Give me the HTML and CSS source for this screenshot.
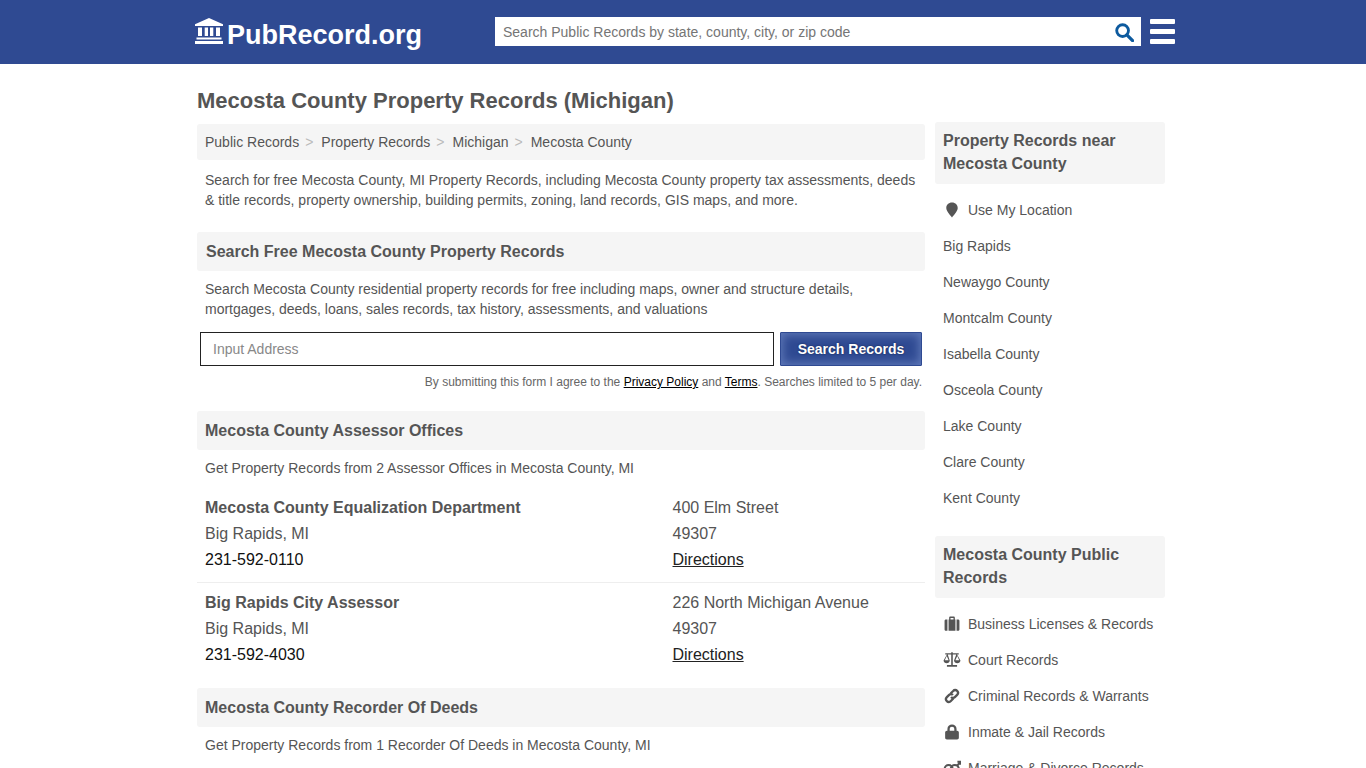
FILE: index.html
```html
<!DOCTYPE html>
<html lang="en">
<head>
<meta charset="utf-8">
<title>Mecosta County Property Records (Michigan)</title>
<link rel="stylesheet" href="styles.css">
</head>
<body>
<header class="topbar">
  <div class="topbar-inner">
    <a class="logo" href="#">
      <svg class="logo-icon" viewBox="0 0 28 26" aria-hidden="true"><path fill="#fff" d="M14 0 28 6.2V8H0V6.200ZM3 9.500H7V18H3ZM9.700 9.500H13V18H9.700ZM15 9.500H18.300V18H15ZM21 9.500H25V18H21ZM1.500 19.500H26.500V21.500H1.500ZM0 23H28V26H0Z"/></svg>
      <span class="logo-text">PubRecord.org</span>
    </a>
    <form class="topsearch">
      <input class="topsearch-input" type="text" placeholder="Search Public Records by state, county, city, or zip code">
      <svg class="topsearch-icon" viewBox="0 0 20 20" aria-hidden="true"><circle cx="8" cy="8" r="6.200" fill="none" stroke="#0d5a9e" stroke-width="3"/><path d="M12.500 12.500 18.500 18.500" stroke="#0d5a9e" stroke-width="3.400" stroke-linecap="round"/></svg>
    </form>
    <div class="burger"><span></span><span></span><span></span></div>
  </div>
</header>

<div class="page">
  <main class="main">
    <h1 class="title">Mecosta County Property Records (Michigan)</h1>
    <nav class="crumbs">
      <a>Public Records</a><i>&gt;</i><a>Property Records</a><i>&gt;</i><a>Michigan</a><i>&gt;</i><a>Mecosta County</a>
    </nav>
    <p class="intro">Search for free Mecosta County, MI Property Records, including Mecosta County property tax assessments, deeds &amp; title records, property ownership, building permits, zoning, land records, GIS maps, and more.</p>

    <h2 class="section section-search">Search Free Mecosta County Property Records</h2>
    <p class="intro intro-search">Search Mecosta County residential property records for free including maps, owner and structure details, mortgages, deeds, loans, sales records, tax history, assessments, and valuations</p>
    <form class="address">
      <input class="address-input" type="text" placeholder="Input Address">
      <button class="address-btn" type="button">Search Records</button>
    </form>
    <p class="legal">By submitting this form I agree to the <a href="#">Privacy Policy</a> and <a href="#">Terms</a>. Searches limited to 5 per day.</p>

    <h2 class="section">Mecosta County Assessor Offices</h2>
    <p class="lead">Get Property Records from 2 Assessor Offices in Mecosta County, MI</p>
    <div class="office">
      <div class="office-col">
        <strong>Mecosta County Equalization Department</strong>
        <span>Big Rapids, MI</span>
        <span class="phone">231-592-0110</span>
      </div>
      <div class="office-col">
        <span>400 Elm Street</span>
        <span>49307</span>
        <a href="#">Directions</a>
      </div>
    </div>
    <div class="office office-next">
      <div class="office-col">
        <strong>Big Rapids City Assessor</strong>
        <span>Big Rapids, MI</span>
        <span class="phone">231-592-4030</span>
      </div>
      <div class="office-col">
        <span>226 North Michigan Avenue</span>
        <span>49307</span>
        <a href="#">Directions</a>
      </div>
    </div>

    <h2 class="section section-deeds">Mecosta County Recorder Of Deeds</h2>
    <p class="lead">Get Property Records from 1 Recorder Of Deeds in Mecosta County, MI</p>
  </main>

  <aside class="side">
    <h3 class="side-head">Property Records near Mecosta County</h3>
    <ul class="side-list side-near">
      <li class="with-icon"><svg class="side-icon" viewBox="0 0 14 14" aria-hidden="true"><path fill="#555" d="M7 .5C10 .5 12 2.600 12 5.300 12 8 9 11 7 13.500 5 11 2 8 2 5.300 2 2.600 4 .5 7 .5Z"/></svg>Use My Location</li>
      <li>Big Rapids</li>
      <li>Newaygo County</li>
      <li>Montcalm County</li>
      <li>Isabella County</li>
      <li>Osceola County</li>
      <li>Lake County</li>
      <li>Clare County</li>
      <li>Kent County</li>
    </ul>
    <h3 class="side-head">Mecosta County Public Records</h3>
    <ul class="side-list">
      <li class="with-icon"><svg class="side-icon" viewBox="0 0 14 14" aria-hidden="true"><path fill="#555" d="M4.500 3V1.500C4.500 1 5 .5 5.500 .5H8.500C9 .5 9.500 1 9.500 1.500V3H10V13H4V3ZM5.700 3H8.300V1.800H5.700ZM.5 4.200C.5 3.500 1 3 1.700 3H3V13H1.700C1 13 .5 12.500 .5 11.800ZM11 3H12.300C13 3 13.500 3.500 13.500 4.200V11.800C13.500 12.500 13 13 12.300 13H11Z"/></svg>Business Licenses &amp; Records</li>
      <li class="with-icon"><svg class="side-icon" viewBox="0 0 16 14" aria-hidden="true"><path fill="#555" d="M7.300 1H2V2.200H3.500L.5 7.500C.5 9 1.800 9.800 3.300 9.800S6 9 6 7.500L4.200 2.200H7.300V11.500H3.500V13H12.500V11.500H8.700V2.200H11.800L9.800 7.500C9.800 9 11.200 9.800 12.700 9.800S15.500 9 15.500 7.500L12.500 2.200H14V1H8.700V0H7.300ZM3.300 3.500 5 7.300H1.600ZM12.700 3.500 14.400 7.300H11Z"/></svg>Court Records</li>
      <li class="with-icon"><svg class="side-icon" viewBox="0 0 14 14" aria-hidden="true"><g fill="none" stroke="#555" stroke-width="2"><path d="M5.800 4.800 8 2.600C9 1.500 10.500 1.500 11.500 2.500S12.500 5 11.500 6L9.500 8C8.500 9 7 8.800 6.200 7.800"/><path d="M8.200 9.200 6 11.400C5 12.500 3.500 12.500 2.500 11.500S1.500 9 2.500 8L4.500 6C5.500 5 7 5.200 7.800 6.200"/></g></svg>Criminal Records &amp; Warrants</li>
      <li class="with-icon"><svg class="side-icon" viewBox="0 0 14 14" aria-hidden="true"><path fill="#555" d="M3 6V4.300C3 2 4.800 .5 7 .5S11 2 11 4.300V6H11.500C12.300 6 13 6.700 13 7.500V12C13 12.800 12.300 13.500 11.500 13.500H2.500C1.700 13.500 1 12.800 1 12V7.500C1 6.700 1.700 6 2.500 6ZM5 6H9V4.300C9 3.200 8.100 2.500 7 2.500S5 3.200 5 4.300Z"/></svg>Inmate &amp; Jail Records</li>
      <li class="with-icon"><svg class="side-icon" viewBox="0 0 16 14" aria-hidden="true"><g fill="none" stroke="#555" stroke-width="1.800"><circle cx="5" cy="8" r="3.600"/><circle cx="10.500" cy="8" r="3.600"/><path d="M12.500 5 15 2.200M12.800 1.500H15.300V4"/></g></svg>Marriage &amp; Divorce Records</li>
    </ul>
  </aside>
</div>
</body>
</html>
```

FILE: styles.css
```css
* { box-sizing: border-box; }
html, body { margin: 0; height: 768px; overflow: hidden; background: #fff; }
body { font-family: "Liberation Sans", Arial, sans-serif; font-size: 14px; line-height: 20px; color: #555; }

.topbar { height: 64px; background: #2f4a92; }
.topbar-inner { width: 980px; margin-left: 195px; height: 64px; display: flex; align-items: flex-start; }
.logo { display: flex; align-items: center; width: 300px; height: 64px; color: #fff; text-decoration: none; }
.logo-icon { width: 28px; height: 26px; margin-right: 4px; margin-top: -3px; }
.logo-text { font-size: 27px; font-weight: 700; line-height: 32px; margin-top: 6px; }
.topsearch { position: relative; width: 646px; height: 29px; margin-top: 17px; background: #fff; }
.topsearch-input { width: 100%; height: 29px; border: 0; outline: 0; padding: 0 40px 0 8px; font: 14px "Liberation Sans", Arial, sans-serif; background: transparent; color: #555; }
.topsearch-input::placeholder { color: #757575; opacity: 1; }
.topsearch-icon { position: absolute; right: 7px; top: 6px; width: 19px; height: 19px; }
.burger { display: flex; flex-direction: column; gap: 5px; width: 25px; margin-left: 9px; margin-top: 19px; }
.burger span { display: block; height: 5px; background: #fff; border-radius: 1px; }

.page { width: 968px; margin-left: 197px; display: flex; gap: 10px; align-items: flex-start; }
.main { width: 728px; flex: none; }
.side { width: 230px; flex: none; padding-top: 58px; }

.title { margin: 0; padding-top: 23px; font-size: 22px; line-height: 27px; font-weight: 700; color: #555; }
.crumbs { margin-top: 10px; height: 36px; background: #f5f5f5; border-radius: 3px; padding: 8px; display: flex; color: #555; }
.crumbs i { font-style: normal; color: #bbb; padding: 0 8px 0 6px; }
.intro { margin: 0; padding: 10px 8px 0; }
.section { margin: 0; background: #f5f5f5; border-radius: 3px; height: 39px; padding: 9px 8px; font-size: 16px; line-height: 21px; font-weight: 700; color: #555; }
.section-search { margin-top: 22px; padding-left: 9px; }
.intro-search { padding-top: 8px; }
.address { display: flex; gap: 6px; padding: 13px 3px 0; }
.address-input { width: 574px; height: 34px; border: 1px solid #222; background: #fff; outline: 0; padding: 0 12px; font: 14px "Liberation Sans", Arial, sans-serif; }
.address-input::placeholder { color: #888; opacity: 1; }
.address-btn { width: 142px; height: 34px; border: 1px solid #2f4a92; border-radius: 1px; background: #2f4a92; box-shadow: inset 0 0 10px 2px #5e78b8; color: #fff; font: 700 14px "Liberation Sans", Arial, sans-serif; text-shadow: 0 0 2px #10204a; padding: 0; }
.legal { margin: 6px 0 0; padding-right: 3px; text-align: right; font-size: 12px; line-height: 20px; color: #666; }
.legal a { color: #000; }
.legal + .section { margin-top: 19px; }
.lead { margin: 0; padding: 8px 8px 0; }
.office { display: flex; padding: 17px 8px 9px; font-size: 16px; line-height: 26px; }
.office-next { border-top: 1px solid #eee; padding-top: 7px; }
.office-col { display: flex; flex-direction: column; align-items: flex-start; width: 467.500px; flex: none; }
.office-col + .office-col { width: auto; }
.office-col strong { font-weight: 700; }
.office-col a { color: #222; }
.phone { color: #111; }
.section-deeds { margin-top: 11px; }

.side-head { margin: 0; background: #f5f5f5; border-radius: 3px; padding: 7px 8px 9px; font-size: 16px; line-height: 23px; font-weight: 700; color: #555; }
.side-list { list-style: none; margin: 0; padding: 8px 8px 20px; }
.side-near { padding-bottom: 20px; }
.side-list li { height: 36px; line-height: 36px; color: #555; white-space: nowrap; display: flex; align-items: center; }
.with-icon { padding-left: 0; }
.side-icon { width: 18px; height: 16px; margin-right: 7px; flex: none; }
```
